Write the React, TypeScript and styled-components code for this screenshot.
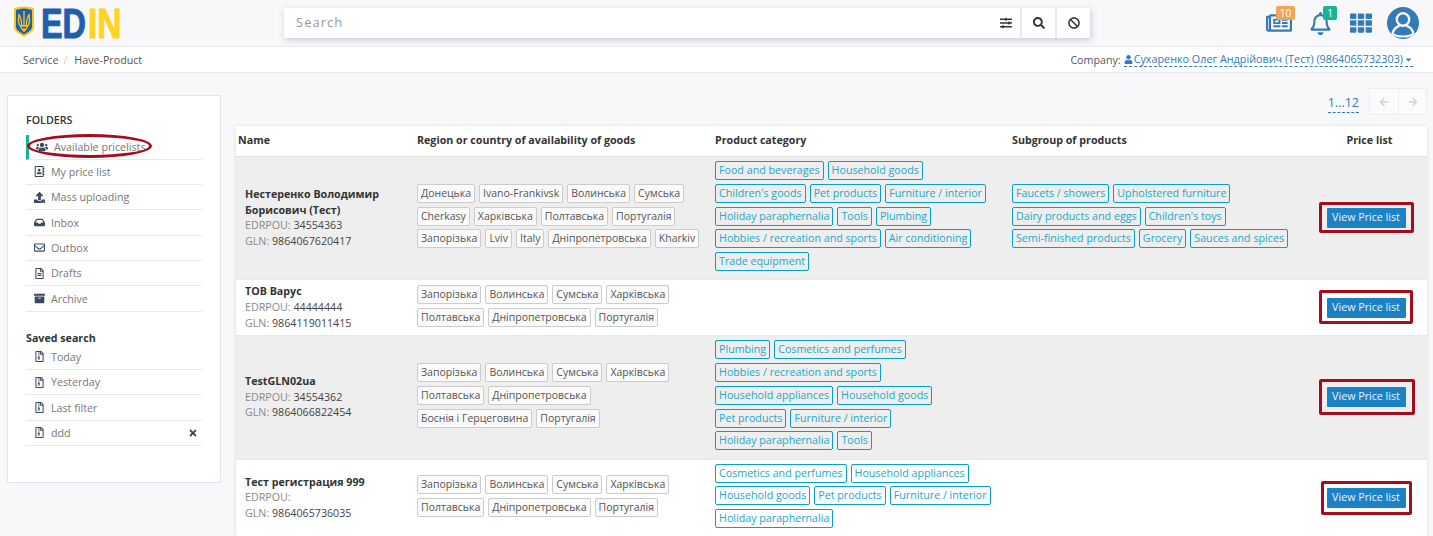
import styled, { createGlobalStyle } from 'styled-components';
import type { ReactNode } from 'react';
import {
  FaArchive,
  FaArrowLeft,
  FaArrowRight,
  FaBan,
  FaCaretDown,
  FaInbox,
  FaRegAddressBook,
  FaRegBell,
  FaRegEnvelope,
  FaRegFileAlt,
  FaRegFileArchive,
  FaRegNewspaper,
  FaSearch,
  FaSlidersH,
  FaTh,
  FaTimes,
  FaUpload,
  FaUser,
  FaUsers,
} from 'react-icons/fa';

const GlobalStyle = createGlobalStyle`
  html, body {
    margin: 0;
    height: 100%;
    overflow: hidden;
    background: #f8f8fb;
    font-family: "Open Sans", "Noto Sans", sans-serif;
    font-size: 10.7px;
    color: #444;
  }
  * { box-sizing: border-box; }
`;

const Header = styled.header`
  display: grid;
  grid-template-columns: 284px 806px 1fr;
  height: 47px;
  align-items: flex-start;
  border-bottom: 1px solid #e7e7ec;
`;

const LogoBox = styled.div`
  padding-left: 14px;
  svg { display: block; }
`;

const SearchBar = styled.div`
  display: flex;
  height: 30px;
  margin-top: 8px;
  background: #e9e9ee;
  gap: 2px;
  box-shadow: 1px 2px 6px rgba(60, 60, 90, 0.25);
`;

const SearchInput = styled.div`
  flex: 1;
  background: #fff;
  display: flex;
  align-items: center;
  justify-content: space-between;
  padding: 0 8px 2px 12px;
  font-size: 13px;
  letter-spacing: 1px;
  color: #999;
`;

const SearchButton = styled.div`
  width: 33px;
  background: #fff;
  display: flex;
  align-items: center;
  justify-content: center;
  color: #333;
  font-size: 12px;
`;

const SliderIcon = styled(FaSlidersH)`
  color: #333;
  font-size: 12px;
  margin-top: 2px;
`;

const HeaderIcons = styled.div`
  display: flex;
  justify-content: flex-end;
  align-items: center;
  height: 46px;
  padding-right: 14px;
`;

const IconSlot = styled.div<{ $w: number; $size: number }>`
  position: relative;
  width: ${p => p.$w}px;
  height: 46px;
  display: flex;
  align-items: center;
  justify-content: center;
  color: #337ab7;
  font-size: ${p => p.$size}px;
`;

const Badge = styled.span<{ $bg: string; $w: number; $right: number }>`
  position: absolute;
  top: 6px;
  right: ${p => p.$right}px;
  width: ${p => p.$w}px;
  height: 14px;
  border-radius: 2px;
  background: ${p => p.$bg};
  color: #fff;
  font-size: 10px;
  line-height: 14px;
  text-align: center;
`;

const Crumbs = styled.nav`
  display: flex;
  justify-content: space-between;
  align-items: center;
  height: 26px;
  padding: 0 20px 0 23px;
  background: #fff;
  border-bottom: 1px solid #e7e7ec;
  color: #555;
`;

const CrumbTrail = styled.div`
  display: flex;
  gap: 5px;
`;

const CrumbSep = styled.span`
  color: #ccc;
  margin-right: 2px;
`;

const CompanyRow = styled.div`
  display: flex;
  gap: 3px;
  align-items: center;
`;

const CompanyLink = styled.span`
  display: inline-flex;
  align-items: center;
  gap: 1px;
  font-size: 10.8px;
  color: #337ab7;
  border-bottom: 1px dashed #337ab7;
  line-height: 14px;
  svg { font-size: 9px; }
`;

const Content = styled.div`
  display: flex;
  align-items: flex-start;
  gap: 15px;
  padding: 0 6px 0 7px;
`;

const Sidebar = styled.aside`
  position: relative;
  width: 214px;
  height: 388px;
  margin-top: 22px;
  padding: 16px 18px 0 18px;
  background: #fff;
  border: 1px solid #e4e4ee;
  flex: none;
`;

const FolderTitle = styled.div`
  font-weight: 600;
  color: #333;
  line-height: 16px;
  margin-bottom: 6.5px;
`;

const SavedTitle = styled.div`
  font-weight: 700;
  color: #333;
  line-height: 14px;
  margin-top: 19px;
`;

const MenuList = styled.ul`
  list-style: none;
  margin: 0;
  padding: 0;
`;

const MenuItem = styled.li<{ $active?: boolean }>`
  display: flex;
  align-items: center;
  height: 25.33px;
  padding-left: ${p => (p.$active ? '7px' : '8px')};
  border-bottom: 1px solid #e8e8ec;
  border-left: ${p => (p.$active ? '3px solid #1ab394' : 'none')};
  color: #777;
`;

const MenuIcon = styled.span<{ $active?: boolean }>`
  width: ${p => (p.$active ? '18px' : '17px')};
  display: flex;
  color: #3c4a5e;
  font-size: ${p => (p.$active ? '12px' : '11px')};
`;

const RemoveIcon = styled(FaTimes)`
  margin-left: auto;
  margin-right: 4px;
  color: #3a3f48;
  font-size: 10px;
`;

const Ellipse = styled.span`
  position: absolute;
  left: 19px;
  top: 38px;
  width: 125px;
  height: 24px;
  border: 3px solid #a50d1c;
  border-radius: 50%;
`;

const Main = styled.main`
  flex: 1;
  min-width: 0;
`;

const Pager = styled.div`
  display: flex;
  justify-content: flex-end;
  gap: 10px;
  height: 53px;
  padding-top: 15px;
`;

const PageCount = styled.span`
  align-self: flex-start;
  color: #337ab7;
  font-size: 12.5px;
  line-height: 18px;
  margin-top: 6px;
  border-bottom: 1px dashed #337ab7;
`;

const PagerButtons = styled.div`
  display: flex;
  height: 27px;
  border: 1px solid #ececf0;
  background: #fbfbfd;
`;

const PagerButton = styled.span`
  width: 28px;
  display: flex;
  align-items: center;
  justify-content: center;
  color: #d4d4d4;
  font-size: 10px;
  & + & { border-left: 1px solid #ececf0; }
`;

const Table = styled.section`
  background: #fff;
  box-shadow: 0 0 4px rgba(60, 60, 90, 0.15);
`;

const Row = styled.div<{ $shade?: boolean }>`
  display: grid;
  grid-template-columns: 181px 298px 297px 300px 1fr;
  align-items: center;
  background: ${p => (p.$shade ? '#eeeeee' : '#fff')};
  border-bottom: 1px solid #e8e8ec;
`;

const HeadRow = styled(Row)`
  height: 31px;
  padding-bottom: 3px;
  border-bottom: 1px solid #e0e0e0;
  font-weight: 700;
  color: #333;
`;

const HeadCell = styled.div<{ $center?: boolean; $pad?: number }>`
  padding-left: ${p => p.$pad ?? 0}px;
  text-align: ${p => (p.$center ? 'center' : 'left')};
`;

const NameCell = styled.div`
  padding: 4px 10px 3.6px 9px;
  line-height: 15.7px;
`;

const CompanyName = styled.div`
  font-weight: 700;
  color: #333;
`;

const Label = styled.span`
  color: #888;
`;

const TagCell = styled.div`
  display: flex;
  flex-wrap: wrap;
  gap: 3.8px 4px;
  padding: 4px 17px 8.3px 0;
`;

const RegionCell = styled(TagCell)`
  padding-right: 10px;
  font-size: 10.5px;
`;

const RegionTag = styled.span`
  height: 19px;
  padding: 0 3px;
  border: 1px solid #ccc;
  border-radius: 2px;
  background: #fafafa;
  color: #555;
  line-height: 17px;
  white-space: nowrap;
`;

const CategoryTag = styled(RegionTag)`
  border-color: #08a0c4;
  background: transparent;
  color: #23a8c9;
`;

const PriceCell = styled.div`
  display: flex;
  justify-content: center;
  padding-right: 7px;
`;

const ViewButton = styled.span`
  position: relative;
  width: 79px;
  height: 20px;
  background: #1b82c5;
  color: #e8f3fa;
  border-radius: 1px;
  line-height: 19px;
  text-align: center;
`;

const RedFrame = styled.span<{ $t: number; $r: number; $b: number; $l: number }>`
  position: absolute;
  top: ${p => -p.$t}px;
  right: ${p => -p.$r}px;
  bottom: ${p => -p.$b}px;
  left: ${p => -p.$l}px;
  border: 3px solid #a50d1c;
  border-radius: 2px;
`;

type Frame = { t: number; r: number; b: number; l: number };

type Seller = {
  name: ReactNode;
  edrpou: string;
  gln: string;
  regions: string[];
  categories: string[];
  subgroups: string[];
  frame: Frame;
};

const sellers: Seller[] = [
  {
    name: 'Нестеренко Володимир Борисович (Тест)',
    edrpou: '34554363',
    gln: '9864067620417',
    regions: ['Донецька', 'Ivano-Frankivsk', 'Волинська', 'Сумська', 'Cherkasy', 'Харківська', 'Полтавська', 'Португалія', 'Запорізька', 'Lviv', 'Italy', 'Дніпропетровська', 'Kharkiv'],
    categories: ['Food and beverages', 'Household goods', "Children's goods", 'Pet products', 'Furniture / interior', 'Holiday paraphernalia', 'Tools', 'Plumbing', 'Hobbies / recreation and sports', 'Air conditioning', 'Trade equipment'],
    subgroups: ['Faucets / showers', 'Upholstered furniture', 'Dairy products and eggs', "Children's toys", 'Semi-finished products', 'Grocery', 'Sauces and spices'],
    frame: { t: 6, r: 8, b: 5, l: 8 },
  },
  {
    name: 'ТОВ Варус',
    edrpou: '44444444',
    gln: '9864119011415',
    regions: ['Запорізька', 'Волинська', 'Сумська', 'Харківська', 'Полтавська', 'Дніпропетровська', 'Португалія'],
    categories: [],
    subgroups: [],
    frame: { t: 8, r: 7, b: 6, l: 8 },
  },
  {
    name: 'TestGLN02ua',
    edrpou: '34554362',
    gln: '9864066822454',
    regions: ['Запорізька', 'Волинська', 'Сумська', 'Харківська', 'Полтавська', 'Дніпропетровська', 'Боснія і Герцеговина', 'Португалія'],
    categories: ['Plumbing', 'Cosmetics and perfumes', 'Hobbies / recreation and sports', 'Household appliances', 'Household goods', 'Pet products', 'Furniture / interior', 'Holiday paraphernalia', 'Tools'],
    subgroups: [],
    frame: { t: 8, r: 9, b: 8, l: 8 },
  },
  {
    name: 'Тест регистрация 999',
    edrpou: '',
    gln: '9864065736035',
    regions: ['Запорізька', 'Волинська', 'Сумська', 'Харківська', 'Полтавська', 'Дніпропетровська', 'Португалія'],
    categories: ['Cosmetics and perfumes', 'Household appliances', 'Household goods', 'Pet products', 'Furniture / interior', 'Holiday paraphernalia'],
    subgroups: [],
    frame: { t: 7, r: 6, b: 7, l: 6 },
  },
];

const folders = [
  { label: 'My price list', icon: <FaRegAddressBook /> },
  { label: 'Mass uploading', icon: <FaUpload /> },
  { label: 'Inbox', icon: <FaInbox /> },
  { label: 'Outbox', icon: <FaRegEnvelope /> },
  { label: 'Drafts', icon: <FaRegFileAlt /> },
  { label: 'Archive', icon: <FaArchive /> },
];

const Logo = () => (
  <svg width="112" height="47" viewBox="0 0 112 47">
    <g transform="translate(0 6)">
      <path d="M0 2.5 C3 1 6 .8 10 .5 C14 .8 17 1 20 2.5 V21 C20 26 14 28 10 31 C6 28 0 26 0 21 Z" fill="#f6c81e" />
      <path d="M2 4 C5 3 7 2.6 10 2.4 C13 2.6 15 3 18 4 V20.5 C18 24.5 13 26.5 10 28.6 C7 26.5 2 24.5 2 20.5 Z" fill="#1f5fae" />
      <path
        d="M10 5 V20 M10 25.5 L10 22 M5 8 C4 14 4 18 6.5 20 H13.5 C16 18 16 14 15 8 M5 8 C7 12 8 15 7.8 20 M15 8 C13 12 12 15 12.2 20 M6.5 20 C7 23 8.5 24 10 25.5 C11.5 24 13 23 13.5 20"
        fill="none"
        stroke="#f6c81e"
        strokeWidth="1.3"
      />
      <text transform="translate(27 32) scale(0.77 1)" fontFamily="'Liberation Sans', sans-serif" fontWeight="700" fontSize="42" fill="#1d5fae" stroke="#1d5fae" strokeWidth="1">ED</text>
      <text transform="translate(74 32) scale(0.8 1)" fontFamily="'Liberation Sans', sans-serif" fontWeight="700" fontSize="42" fill="#ffd420" stroke="#ffd420" strokeWidth="1">IN</text>
    </g>
  </svg>
);

const Avatar = () => (
  <svg width="32" height="32" viewBox="0 0 32 32">
    <circle cx="16" cy="16" r="16" fill="#337ab7" />
    <circle cx="16" cy="12.5" r="6.2" fill="none" stroke="#f8f8fb" strokeWidth="2.4" />
    <path d="M5.5 27 C6.5 21.5 10 19.5 12.5 18.8 M26.5 27 C25.5 21.5 22 19.5 19.5 18.8" fill="none" stroke="#f8f8fb" strokeWidth="2.4" />
    <path d="M5.5 26.5 C9 30.5 23 30.5 26.5 26.5" fill="none" stroke="#f8f8fb" strokeWidth="2" />
  </svg>
);

export default function App() {
  return (
    <>
      <GlobalStyle />
      <Header>
        <LogoBox>
          <Logo />
        </LogoBox>
        <SearchBar>
          <SearchInput>
            Search
            <SliderIcon />
          </SearchInput>
          <SearchButton>
            <FaSearch />
          </SearchButton>
          <SearchButton>
            <FaBan />
          </SearchButton>
        </SearchBar>
        <HeaderIcons>
          <IconSlot $w={53} $size={26}>
            <FaRegNewspaper />
            <Badge $bg="#f2a654" $w={19} $right={10}>10</Badge>
          </IconSlot>
          <IconSlot $w={30} $size={23}>
            <FaRegBell />
            <Badge $bg="#1ab394" $w={14} $right={-2}>1</Badge>
          </IconSlot>
          <IconSlot $w={52} $size={22}>
            <FaTh />
          </IconSlot>
          <IconSlot $w={32} $size={32}>
            <Avatar />
          </IconSlot>
        </HeaderIcons>
      </Header>
      <Crumbs>
        <CrumbTrail>
          <span>Service</span>
          <CrumbSep>/</CrumbSep>
          <span>Have-Product</span>
        </CrumbTrail>
        <CompanyRow>
          Company:
          <CompanyLink>
            <FaUser />
            Сухаренко Олег Андрійович (Тест) (9864065732303)
            <FaCaretDown />
          </CompanyLink>
        </CompanyRow>
      </Crumbs>
      <Content>
        <Sidebar>
          <FolderTitle>FOLDERS</FolderTitle>
          <MenuList>
            <MenuItem $active>
              <MenuIcon $active>
                <FaUsers />
              </MenuIcon>
              Available pricelists
            </MenuItem>
            {folders.map(f => (
              <MenuItem key={f.label}>
                <MenuIcon>{f.icon}</MenuIcon>
                {f.label}
              </MenuItem>
            ))}
          </MenuList>
          <SavedTitle>Saved search</SavedTitle>
          <MenuList>
            {['Today', 'Yesterday', 'Last filter', 'ddd'].map(s => (
              <MenuItem key={s}>
                <MenuIcon>
                  <FaRegFileArchive />
                </MenuIcon>
                {s}
                {s === 'ddd' && <RemoveIcon />}
              </MenuItem>
            ))}
          </MenuList>
          <Ellipse />
        </Sidebar>
        <Main>
          <Pager>
            <PageCount>1...12</PageCount>
            <PagerButtons>
              <PagerButton>
                <FaArrowLeft />
              </PagerButton>
              <PagerButton>
                <FaArrowRight />
              </PagerButton>
            </PagerButtons>
          </Pager>
          <Table>
            <HeadRow>
              <HeadCell $pad={2}>Name</HeadCell>
              <HeadCell>Region or country of availability of goods</HeadCell>
              <HeadCell>Product category</HeadCell>
              <HeadCell>Subgroup of products</HeadCell>
              <HeadCell $center>Price list</HeadCell>
            </HeadRow>
            {sellers.map((s, i) => (
              <Row key={s.gln} $shade={i % 2 === 0}>
                <NameCell>
                  <CompanyName>{s.name}</CompanyName>
                  <div>
                    <Label>EDRPOU:</Label> {s.edrpou}
                  </div>
                  <div>
                    <Label>GLN:</Label> {s.gln}
                  </div>
                </NameCell>
                <RegionCell>
                  {s.regions.map(r => (
                    <RegionTag key={r}>{r}</RegionTag>
                  ))}
                </RegionCell>
                <TagCell>
                  {s.categories.map(c => (
                    <CategoryTag key={c}>{c}</CategoryTag>
                  ))}
                </TagCell>
                <TagCell>
                  {s.subgroups.map(c => (
                    <CategoryTag key={c}>{c}</CategoryTag>
                  ))}
                </TagCell>
                <PriceCell>
                  <ViewButton>
                    View Price list
                    <RedFrame $t={s.frame.t} $r={s.frame.r} $b={s.frame.b} $l={s.frame.l} />
                  </ViewButton>
                </PriceCell>
              </Row>
            ))}
          </Table>
        </Main>
      </Content>
    </>
  );
}
